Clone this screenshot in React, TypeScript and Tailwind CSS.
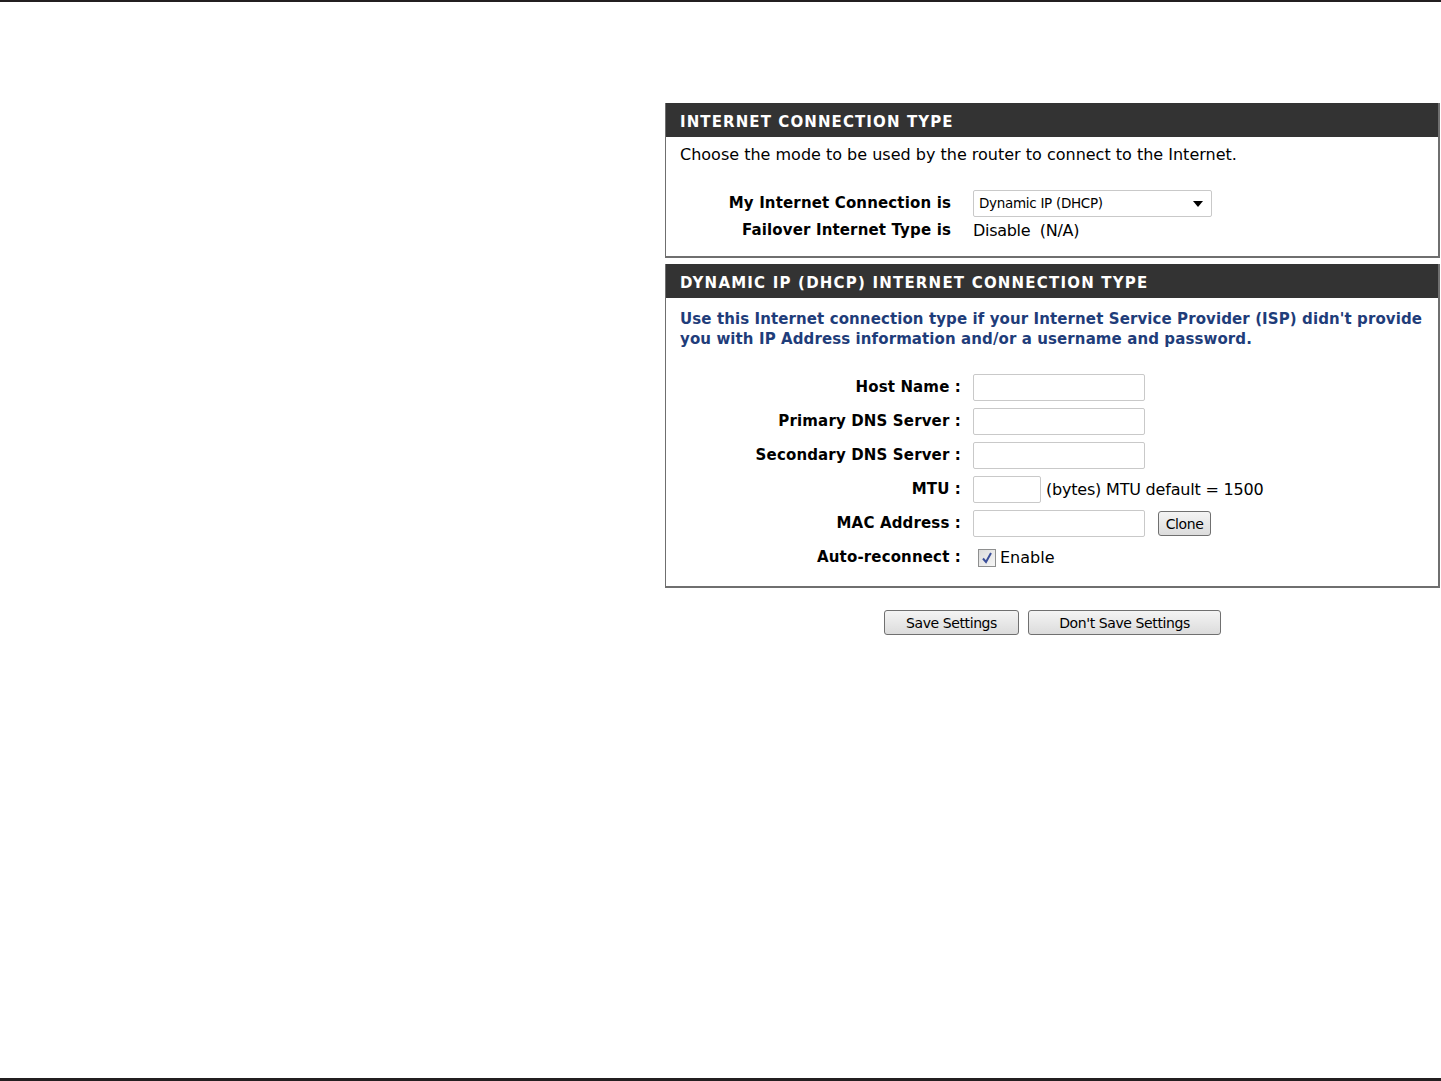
import React from "react";

const font = { fontFamily: '"DejaVu Sans", Verdana, sans-serif' };

function Label({ children }: { children: React.ReactNode }) {
  return <div className="text-right font-bold text-[15px] text-black tracking-[0.15px]">{children}</div>;
}

function TextInput({ w }: { w: string }) {
  return <div className={`${w} h-[27px] border border-[#c9c9c9] rounded-[2px] bg-white`} />;
}

function Btn({ children, w }: { children: React.ReactNode; w: string }) {
  return (
    <button className={`${w} h-[25px] border border-[#707070] rounded-[3px] bg-gradient-to-b from-[#f4f4f4] to-[#dcdcdc] text-[14px] text-black tracking-[-0.4px] leading-none`}>
      {children}
    </button>
  );
}

export default function App() {
  return (
    <div className="w-[1441px] h-[1081px] bg-white relative flex flex-col" style={font}>
      <div className="h-[2px] bg-[#231f20]" />
      <div className="flex-1 pl-[665px] pt-[101px]">
        <div className="w-[775px] border-r-2 border-b-2 border-l border-[#6f6f6f]">
          <div className="h-[34px] bg-[#333333] flex items-center pl-[14px] pt-[4px] text-white font-bold text-[15px] tracking-[1.1px]">
            INTERNET CONNECTION TYPE
          </div>
          <div className="pl-[14px] pt-[8px] pb-[12px] text-[16px] text-black">
            <div className="h-[20px] leading-[20px]">Choose the mode to be used by the router to connect to the Internet.</div>
            <div className="grid grid-cols-[271px_1fr] gap-x-[22px] mt-[25px] items-center">
              <Label>My Internet Connection is</Label>
              <div className="w-[239px] h-[27px] border border-[#c9c9c9] rounded-[2px] flex items-center justify-between pl-[5px] pr-[8px] text-[13.5px] tracking-[-0.3px]">
                <span>Dynamic IP (DHCP)</span>
                <svg width="10" height="6" viewBox="0 0 10 6"><path d="M0 0h10L5 6z" fill="#000" /></svg>
              </div>
              <div className="h-[27px] flex items-center justify-end"><Label>Failover Internet Type is</Label></div>
              <div className="h-[27px] flex items-center tracking-[-0.3px]">Disable&nbsp;&nbsp;(N/A)</div>
            </div>
          </div>
        </div>
        <div className="w-[775px] mt-[6px] border-r-2 border-b-2 border-l border-[#6f6f6f]">
          <div className="h-[34px] bg-[#333333] flex items-center pl-[14px] pt-[4px] text-white font-bold text-[15px] tracking-[1.2px]">
            DYNAMIC IP (DHCP) INTERNET CONNECTION TYPE
          </div>
          <div className="pl-[14px] pt-[11px] pb-[15px]">
            <div className="text-[#1f3d7a] font-bold text-[15px] leading-[20px] tracking-[0.1px]">
              Use this Internet connection type if your Internet Service Provider (ISP) didn't provide
              <br />
              you with IP Address information and/or a username and password.
            </div>
            <div className="grid grid-cols-[281px_1fr] gap-x-[12px] gap-y-[7px] mt-[25px] items-center text-[16px]">
              <Label>Host Name :</Label>
              <TextInput w="w-[172px]" />
              <Label>Primary DNS Server :</Label>
              <TextInput w="w-[172px]" />
              <Label>Secondary DNS Server :</Label>
              <TextInput w="w-[172px]" />
              <Label>MTU :</Label>
              <div className="flex items-center gap-[5px]">
                <TextInput w="w-[68px]" />
                <span className="tracking-[-0.2px]">(bytes) MTU default = 1500</span>
              </div>
              <Label>MAC Address :</Label>
              <div className="flex items-center gap-[13px]">
                <TextInput w="w-[172px]" />
                <Btn w="w-[53px]">Clone</Btn>
              </div>
              <Label>Auto-reconnect :</Label>
              <div className="flex items-center gap-[4px] pl-[5px] h-[27px]">
                <div className="w-[18px] h-[18px] border border-[#8e8f8f] bg-gradient-to-br from-[#dcdcdc] to-[#f6f6f6] flex items-center justify-center">
                  <svg width="12" height="12" viewBox="0 0 12 12"><path d="M2 6.5l3 3.5 5-9" stroke="#3b4f9a" strokeWidth="2" fill="none" /></svg>
                </div>
                <span>Enable</span>
              </div>
            </div>
          </div>
        </div>
        <div className="w-[775px] flex justify-center gap-[9px] mt-[22px]">
          <Btn w="w-[135px]">Save Settings</Btn>
          <Btn w="w-[193px]">Don't Save Settings</Btn>
        </div>
      </div>
      <div className="h-[3px] bg-[#231f20]" />
    </div>
  );
}
